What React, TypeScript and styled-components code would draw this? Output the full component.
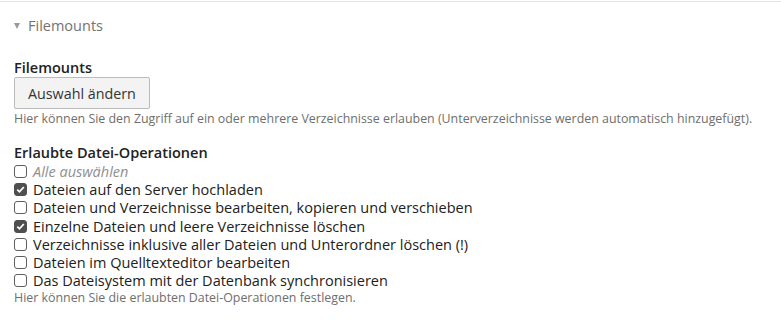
import React from 'react';
import styled, {createGlobalStyle} from 'styled-components';

const GlobalStyle = createGlobalStyle`
  body {
    margin: 0;
    background: #ffffff;
    font-family: "Open Sans", "Noto Sans", Arial, sans-serif;
    color: #212121;
  }
`;

const StyledPanel = styled.div`
  border-top: 1px solid #e3e3e3;
  margin-top: 1px;
  padding: 0 14px;
`;

const StyledPanelHeader = styled.div`
  display: flex;
  align-items: center;
  gap: 8px;
  height: 46px;
  color: #737373;
  font-size: 14.5px;
`;

const StyledCaret = styled.span`
  width: 0;
  height: 0;
  border-left: 3.5px solid transparent;
  border-right: 3.5px solid transparent;
  border-top: 6px solid #9a9a9a;
  margin-top: 1px;
`;

const StyledSection = styled.section<{ $gap?: number }>`
  margin-top: ${(p) => p.$gap ?? 11}px;
`;

const StyledLabel = styled.div`
  font-weight: 600;
  font-size: 14.5px;
  line-height: 18px;
`;

const StyledButton = styled.button`
  font-family: inherit;
  font-size: 14.3px;
  color: #333333;
  background: #f3f3f3;
  border: 1px solid #bbbbbb;
  border-radius: 2px;
  height: 32px;
  padding: 0 13px;
  margin-top: 0;
`;

const StyledHelp = styled.div<{ $gap?: number }>`
  color: #6e6e6e;
  font-size: 12.4px;
  line-height: 16px;
  margin-top: ${(p) => p.$gap ?? 2}px;
`;

const StyledCheckList = styled.div`
  display: flex;
  flex-direction: column;
`;

const StyledCheckRow = styled.label<{ $muted?: boolean }>`
  display: flex;
  align-items: center;
  gap: 6px;
  height: 18.3px;
  font-size: 14.5px;
  color: ${(p) => (p.$muted ? '#8f8f8f' : '#212121')};
  font-style: ${(p) => (p.$muted ? 'italic' : 'normal')};
`;

const StyledBox = styled.span<{ $checked?: boolean }>`
  box-sizing: border-box;
  width: 13px;
  height: 13px;
  border-radius: 3px;
  border: 1px solid ${(p) => (p.$checked ? '#4f4f4f' : '#5e5e5e')};
  background: ${(p) => (p.$checked ? '#4f4f4f' : '#ffffff')};
  display: flex;
  align-items: center;
  justify-content: center;
  flex-shrink: 0;
`;

const operations = [
  { label: 'Dateien auf den Server hochladen', checked: true },
  { label: 'Dateien und Verzeichnisse bearbeiten, kopieren und verschieben', checked: false },
  { label: 'Einzelne Dateien und leere Verzeichnisse löschen', checked: true },
  { label: 'Verzeichnisse inklusive aller Dateien und Unterordner löschen (!)', checked: false },
  { label: 'Dateien im Quelltexteditor bearbeiten', checked: false },
  { label: 'Das Dateisystem mit der Datenbank synchronisieren', checked: false },
];

const CheckBox = ({checked}: {checked?: boolean}) => (
  <StyledBox $checked={checked}>
    {checked ? (
      <svg width="9" height="9" viewBox="0 0 9 9">
        <path d="M1.3 4.6 L3.5 6.8 L7.8 2" stroke="#ffffff" strokeWidth="1.8" fill="none" />
      </svg>
    ) : null}
  </StyledBox>
);

const App = () => {
  return (
    <StyledPanel>
      <GlobalStyle />
      <StyledPanelHeader>
        <StyledCaret />
        Filemounts
      </StyledPanelHeader>
      <StyledSection $gap={11}>
        <StyledLabel>Filemounts</StyledLabel>
        <StyledButton>Auswahl ändern</StyledButton>
        <StyledHelp>Hier können Sie den Zugriff auf ein oder mehrere Verzeichnisse erlauben (Unterverzeichnisse werden automatisch hinzugefügt).</StyledHelp>
      </StyledSection>
      <StyledSection $gap={17}>
        <StyledLabel>Erlaubte Datei-Operationen</StyledLabel>
        <StyledCheckList>
          <StyledCheckRow $muted>
            <CheckBox />
            Alle auswählen
          </StyledCheckRow>
          {operations.map((op) => (
            <StyledCheckRow key={op.label}>
              <CheckBox checked={op.checked} />
              {op.label}
            </StyledCheckRow>
          ))}
        </StyledCheckList>
        <StyledHelp $gap={0}>Hier können Sie die erlaubten Datei-Operationen festlegen.</StyledHelp>
      </StyledSection>
    </StyledPanel>
  );
};

export default App;
